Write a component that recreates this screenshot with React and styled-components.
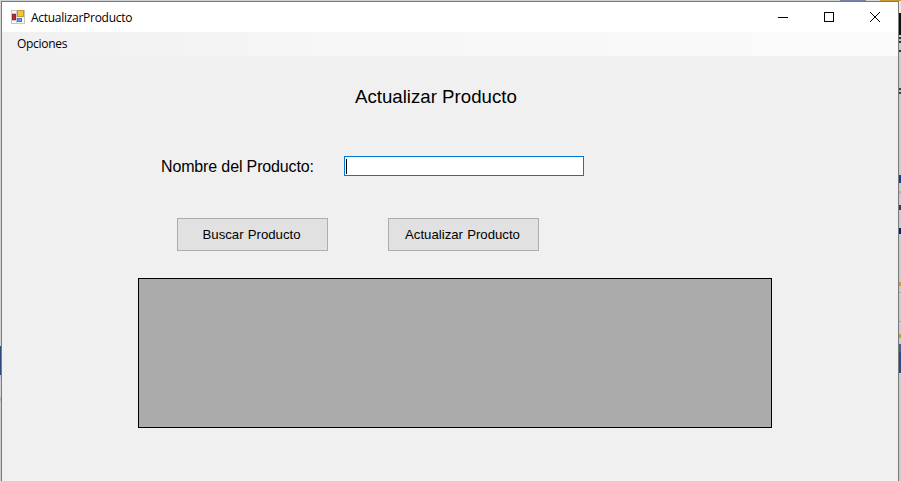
import React from "react";
import styled, { createGlobalStyle } from "styled-components";

const Global = createGlobalStyle`
  html, body { margin: 0; padding: 0; background: #cfcfcf; overflow: hidden; }
  * { box-sizing: border-box; }
`;

const Screen = styled.div`
  width: 901px;
  height: 481px;
  display: flex;
  flex-direction: column;
  overflow: hidden;
  background: #cfcfcf;
`;
const TopStrip = styled.div`
  height: 1px;
  flex: none;
  display: flex;
  background: #d8d8d8;
`;
const Row = styled.div`
  flex: 1;
  display: flex;
  min-height: 0;
`;
const Edge = styled.div`
  flex: none;
  width: ${(p) => p.$w}px;
  display: flex;
  flex-direction: column;
  background: #cdcdcd;
`;
const Seg = styled.div`
  flex: none;
  height: ${(p) => p.$h}px;
  background: ${(p) => p.$c};
`;
const Chip = styled.div`
  flex: none;
  width: ${(p) => p.$w}px;
  background: ${(p) => p.$c};
`;
const Window = styled.div`
  flex: 1;
  min-width: 0;
  display: flex;
  flex-direction: column;
  border: 1px solid #7a7a7a;
  border-bottom: 0;
  background: #f0f0f0;
`;
const TitleBar = styled.div`
  height: 30px;
  flex: none;
  background: #fff;
  display: flex;
  align-items: center;
  padding-left: 9px;
`;
const AppIcon = styled.svg`
  width: 14px;
  height: 14px;
  flex: none;
  margin-right: 6px;
`;
const TitleText = styled.span`
  font: 12px "Open Sans", "Noto Sans", sans-serif;
  letter-spacing: -0.28px;
  color: #000;
  flex: 1;
`;
const WinButton = styled.div`
  width: 46px;
  height: 30px;
  display: flex;
  align-items: center;
  justify-content: center;
`;
const MenuBar = styled.div`
  height: 24px;
  flex: none;
  background: linear-gradient(to right, #f0f0f0, #f6f6f6 35%, #fbfbfb);
  display: flex;
  align-items: center;
  padding: 0 0 2px 15px;
`;
const MenuItem = styled.span`
  font: 12px "Open Sans", "Noto Sans", sans-serif;
  letter-spacing: -0.3px;
  color: #000;
`;
const Body = styled.div`
  flex: 1;
  display: flex;
  flex-direction: column;
  align-items: flex-start;
  padding-left: 136px;
`;
const Heading = styled.h1`
  margin: 31px 0 0 217px;
  font: 400 18.67px/20px "Liberation Sans", Arial, sans-serif;
  color: #000;
`;
const FieldRow = styled.div`
  display: flex;
  align-items: center;
  margin: 49px 0 0 23px;
  height: 20px;
`;
const FieldLabel = styled.label`
  width: 183px;
  padding-top: 1px;
  font: 16px/19px "Liberation Sans", Arial, sans-serif;
  letter-spacing: -0.14px;
  color: #000;
`;
const TextField = styled.div`
  width: 240px;
  height: 20px;
  background: #fff;
  border: 1px solid #0078d7;
  display: flex;
  align-items: center;
  padding-left: 1px;
`;
const Caret = styled.span`
  width: 1px;
  height: 15px;
  background: #000;
`;
const ButtonRow = styled.div`
  display: flex;
  gap: 60px;
  margin: 42px 0 0 39px;
`;
const ActionButton = styled.button`
  width: 151px;
  height: 33px;
  padding: 0 2px 0 0;
  background: #e1e1e1;
  border: 1px solid #adadad;
  font: 13.2px "Liberation Sans", Arial, sans-serif;
  word-spacing: 0.5px;
  color: #000;
`;
const Grid = styled.div`
  width: 634px;
  height: 150px;
  margin-top: 27px;
  background: #ababab;
  border: 1px solid #000;
`;

const rightSegs = [
  [12, "#e8e8e8"], [22, "#101010"], [2, "#cdcdcd"], [2, "#333"], [2, "#bbb"], [2, "#333"], [7, "#cdcdcd"], [2, "#333"],
  [36, "#cdcdcd"], [2, "#444"], [2, "#bbb"], [2, "#444"], [81, "#cdcdcd"],
  [8, "#1a3f8a"], [8, "#cdcdcd"], [3, "#b5b5b5"], [11, "#cdcdcd"], [5, "#5b2b50"], [18, "#cdcdcd"], [6, "#10206a"],
  [48, "#cdcdcd"], [4, "#d89a30"], [6, "#cdcdcd"], [1, "#aaa"], [28, "#cdcdcd"], [1, "#aaa"], [12, "#cdcdcd"], [4, "#d89a30"],
  [6, "#cdcdcd"], [8, "#4a5f8f"], [21, "#33487f"],
];
const leftSegs = [
  [345, "#d4d4d4"], [29, "#33487f"], [4, "#c4c9d4"], [18, "#d4d4d4"], [4, "#a8b6d2"],
];

export default function App() {
  return (
    <Screen>
      <Global />
      <TopStrip>
        <Chip $w={840} $c="#d0d0d0" />
        <Chip $w={26} $c="#7482a8" />
        <Chip $w={14} $c="#d8d8d8" />
        <Chip $w={21} $c="#c9963a" />
      </TopStrip>
      <Row>
        <Edge $w={1}>
          {leftSegs.map(([h, c], i) => <Seg key={i} $h={h} $c={c} />)}
        </Edge>
        <Window>
          <TitleBar>
            <AppIcon viewBox="0 0 14 14">
              <rect x="0.5" y="0.5" width="13" height="13" fill="#f7f7f7" stroke="#c4c4c4" />
              <path d="M0 3.5H6M5.5 0V14M0 10.5H6M6 13.5H14" stroke="#c9c9c9" strokeWidth="1" />
              <rect x="1.5" y="4.5" width="3" height="5" fill="#c0282d" stroke="#8a2a2a" />
              <rect x="6.5" y="0.5" width="6" height="6" fill="#f5c63a" stroke="#c9962a" />
              <rect x="6.5" y="8.5" width="4" height="3" fill="#6aa0ea" stroke="#4078c8" />
            </AppIcon>
            <TitleText>ActualizarProducto</TitleText>
            <WinButton>
              <svg width="10" height="10" viewBox="0 0 10 10"><path d="M0 5.5H10" stroke="#000" strokeWidth="1" /></svg>
            </WinButton>
            <WinButton>
              <svg width="10" height="10" viewBox="0 0 10 10"><rect x="0.5" y="0.5" width="9" height="9" fill="none" stroke="#000" /></svg>
            </WinButton>
            <WinButton>
              <svg width="10" height="10" viewBox="0 0 10 10"><path d="M0 0L10 10M10 0L0 10" stroke="#000" strokeWidth="1" /></svg>
            </WinButton>
          </TitleBar>
          <MenuBar><MenuItem>Opciones</MenuItem></MenuBar>
          <Body>
            <Heading>Actualizar Producto</Heading>
            <FieldRow>
              <FieldLabel>Nombre del Producto:</FieldLabel>
              <TextField><Caret /></TextField>
            </FieldRow>
            <ButtonRow>
              <ActionButton>Buscar Producto</ActionButton>
              <ActionButton>Actualizar Producto</ActionButton>
            </ButtonRow>
            <Grid />
          </Body>
        </Window>
        <Edge $w={2}>
          {rightSegs.map(([h, c], i) => <Seg key={i} $h={h} $c={c} />)}
        </Edge>
      </Row>
    </Screen>
  );
}
